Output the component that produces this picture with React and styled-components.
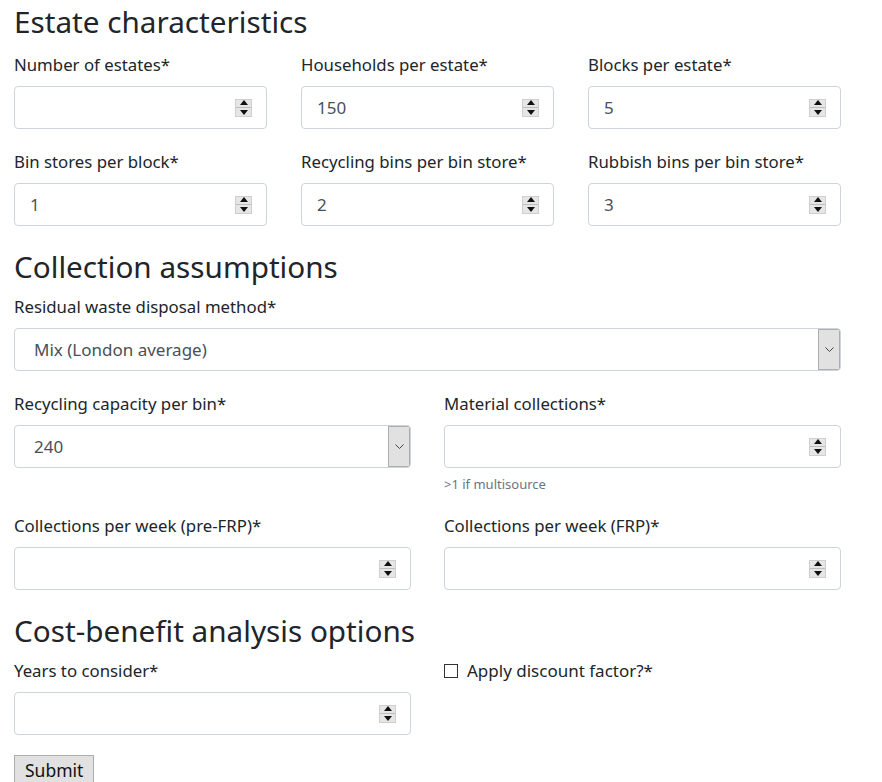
import React from "react";
import styled, { createGlobalStyle } from "styled-components";

const GlobalStyle = createGlobalStyle`
    body {
        margin: 0;
        background: #fff;
        font-family: "Noto Sans", "Open Sans", sans-serif;
        color: #212529;
    }
`

const Page = styled.form`
    width: 827px;
    padding: 0 0 0 14px;
`

const Heading = styled.h2`
    margin: ${({ first }) => first ? '0 0 6px' : '4px 0 3px'};
    padding-top: 3px;
    font-size: 29.7px;
    font-weight: 400;
    line-height: 38px;
    height: 38px;
    white-space: nowrap;
`

const Row = styled.div`
    display: grid;
    grid-template-columns: ${({ cols }) => `repeat(${cols}, 1fr)`};
    column-gap: ${({ cols }) => cols === 3 ? '34px' : '33px'};
`

const Group = styled.div`
    display: flex;
    flex-direction: column;
    padding-top: 6px;
    margin-bottom: 15px;
`

const Label = styled.label`
    display: block;
    font-size: 16.8px;
    line-height: 24px;
    height: 24px;
    margin-bottom: 9px;
    white-space: nowrap;
`

const Field = styled.div`
    box-sizing: border-box;
    height: 43px;
    border: 1px solid #ced4da;
    border-radius: 4px;
    display: flex;
    align-items: center;
    padding: 0 14px 0 15px;
    background: #fff;
`

const Value = styled.span`
    flex: 1;
    font-size: 17px;
    color: #495057;
`

const Spinner = styled.span`
    box-sizing: border-box;
    width: 17px;
    height: 18px;
    background: #e6e6e6;
    border: 1px solid #cfcfcf;
    display: flex;
    flex-direction: column;
    align-items: center;
    justify-content: space-around;
    & i {
        width: 0;
        height: 0;
        border-left: 4px solid transparent;
        border-right: 4px solid transparent;
    }
    & i:first-child { border-bottom: 5px solid #111; }
    & i:last-child { border-top: 5px solid #111; }
    & b {
        width: 15px;
        height: 1px;
        background: #bdbdbd;
    }
`

const SelectBox = styled.div`
    box-sizing: border-box;
    height: 43px;
    border: 1px solid #ced4da;
    border-radius: 4px;
    display: flex;
    align-items: stretch;
    overflow: hidden;
    background: #fff;
`

const SelectText = styled.span`
    flex: 1;
    display: flex;
    align-items: center;
    padding-left: 19px;
    font-size: 17px;
    color: #495057;
`

const SelectArrow = styled.span`
    box-sizing: border-box;
    width: 22px;
    background: #e1e1e1;
    border: 1px solid #adadad;
    display: flex;
    align-items: center;
    justify-content: center;
`

const Help = styled.small`
    display: block;
    margin-top: 8px;
    font-size: 13px;
    line-height: 17px;
    color: #6c757d;
`

const Check = styled.label`
    display: flex;
    align-items: center;
    gap: 9px;
    font-size: 17px;
    line-height: 24px;
    height: 24px;
    white-space: nowrap;
    & span {
        box-sizing: border-box;
        width: 14px;
        height: 14px;
        border: 1px solid #333;
        background: #fff;
    }
`

const SubmitButton = styled.button`
    margin-top: 5px;
    font-family: inherit;
    font-size: 17.5px;
    line-height: 24px;
    padding: 2px 10px 6px;
    background: #e1e1e1;
    border: 1px solid #adadad;
    color: #111;
    border-radius: 0;
`

function NumberField({ label, value }) {
    return (
        <Group>
            <Label>{label}</Label>
            <Field>
                <Value>{value}</Value>
                <Spinner><i /><b /><i /></Spinner>
            </Field>
        </Group>
    );
}

function SelectField({ label, value }) {
    return (
        <Group>
            <Label>{label}</Label>
            <SelectBox>
                <SelectText>{value}</SelectText>
                <SelectArrow>
                    <svg width="9" height="5" viewBox="0 0 9 5">
                        <path d="M0.5 0.5 L4.5 4.5 L8.5 0.5" fill="none" stroke="#444" strokeWidth="1" />
                    </svg>
                </SelectArrow>
            </SelectBox>
        </Group>
    );
}

function App() {
    return (
        <>
            <GlobalStyle />
            <Page>
                <Heading first>Estate characteristics</Heading>
                <Row cols={3}>
                    <NumberField label="Number of estates*" value="" />
                    <NumberField label="Households per estate*" value="150" />
                    <NumberField label="Blocks per estate*" value="5" />
                    <NumberField label="Bin stores per block*" value="1" />
                    <NumberField label="Recycling bins per bin store*" value="2" />
                    <NumberField label="Rubbish bins per bin store*" value="3" />
                </Row>

                <Heading>Collection assumptions</Heading>
                <Row cols={1}>
                    <SelectField label="Residual waste disposal method*" value="Mix (London average)" />
                </Row>
                <Row cols={2}>
                    <SelectField label="Recycling capacity per bin*" value="240" />
                    <Group>
                        <Label>Material collections*</Label>
                        <Field>
                            <Value></Value>
                            <Spinner><i /><b /><i /></Spinner>
                        </Field>
                        <Help>&gt;1 if multisource</Help>
                    </Group>
                    <NumberField label="Collections per week (pre-FRP)*" value="" />
                    <NumberField label="Collections per week (FRP)*" value="" />
                </Row>

                <Heading>Cost-benefit analysis options</Heading>
                <Row cols={2}>
                    <NumberField label="Years to consider*" value="" />
                    <Group>
                        <Check><span />Apply discount factor?*</Check>
                    </Group>
                </Row>
                <SubmitButton type="button">Submit</SubmitButton>
            </Page>
        </>
    );
}

export default App;
